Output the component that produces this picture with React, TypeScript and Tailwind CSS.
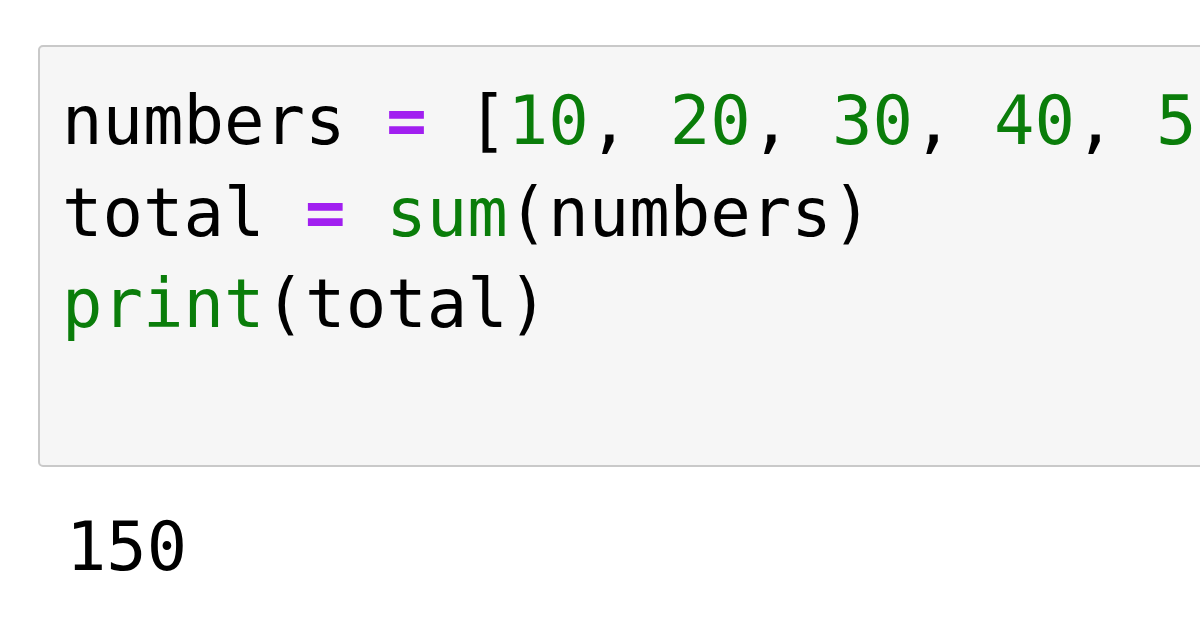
const mono = "font-['DejaVu_Sans_Mono','Liberation_Mono',monospace]";

function Op({ children }: { children: string }) {
  return <span className="text-[#a11ff0] font-bold">{children}</span>;
}

function Num({ children }: { children: string }) {
  return <span className="text-[#0a7d0a]">{children}</span>;
}

export default function App() {
  return (
    <div className="w-[1200px] h-[628px] overflow-hidden bg-white">
      <div className="pt-[45px] pl-[38px]">
        <div className="w-[1220px] h-[422px] rounded-[5px] border-2 border-[#c9c9c9] bg-[#f6f6f6] pt-[29px] pl-[22px]">
          <pre className={`${mono} text-[67.3px] leading-[91.5px] text-black`}>
            <div>
              numbers <Op>=</Op> [<Num>10</Num>, <Num>20</Num>, <Num>30</Num>, <Num>40</Num>, <Num>50</Num>]
            </div>
            <div>
              total <Op>=</Op> <Num>sum</Num>(numbers)
            </div>
            <div>
              <Num>print</Num>(total)
            </div>
          </pre>
        </div>
        <pre className={`${mono} text-[67px] leading-[91.5px] text-black pl-[28px] pt-[35px]`}>150</pre>
      </div>
    </div>
  );
}
